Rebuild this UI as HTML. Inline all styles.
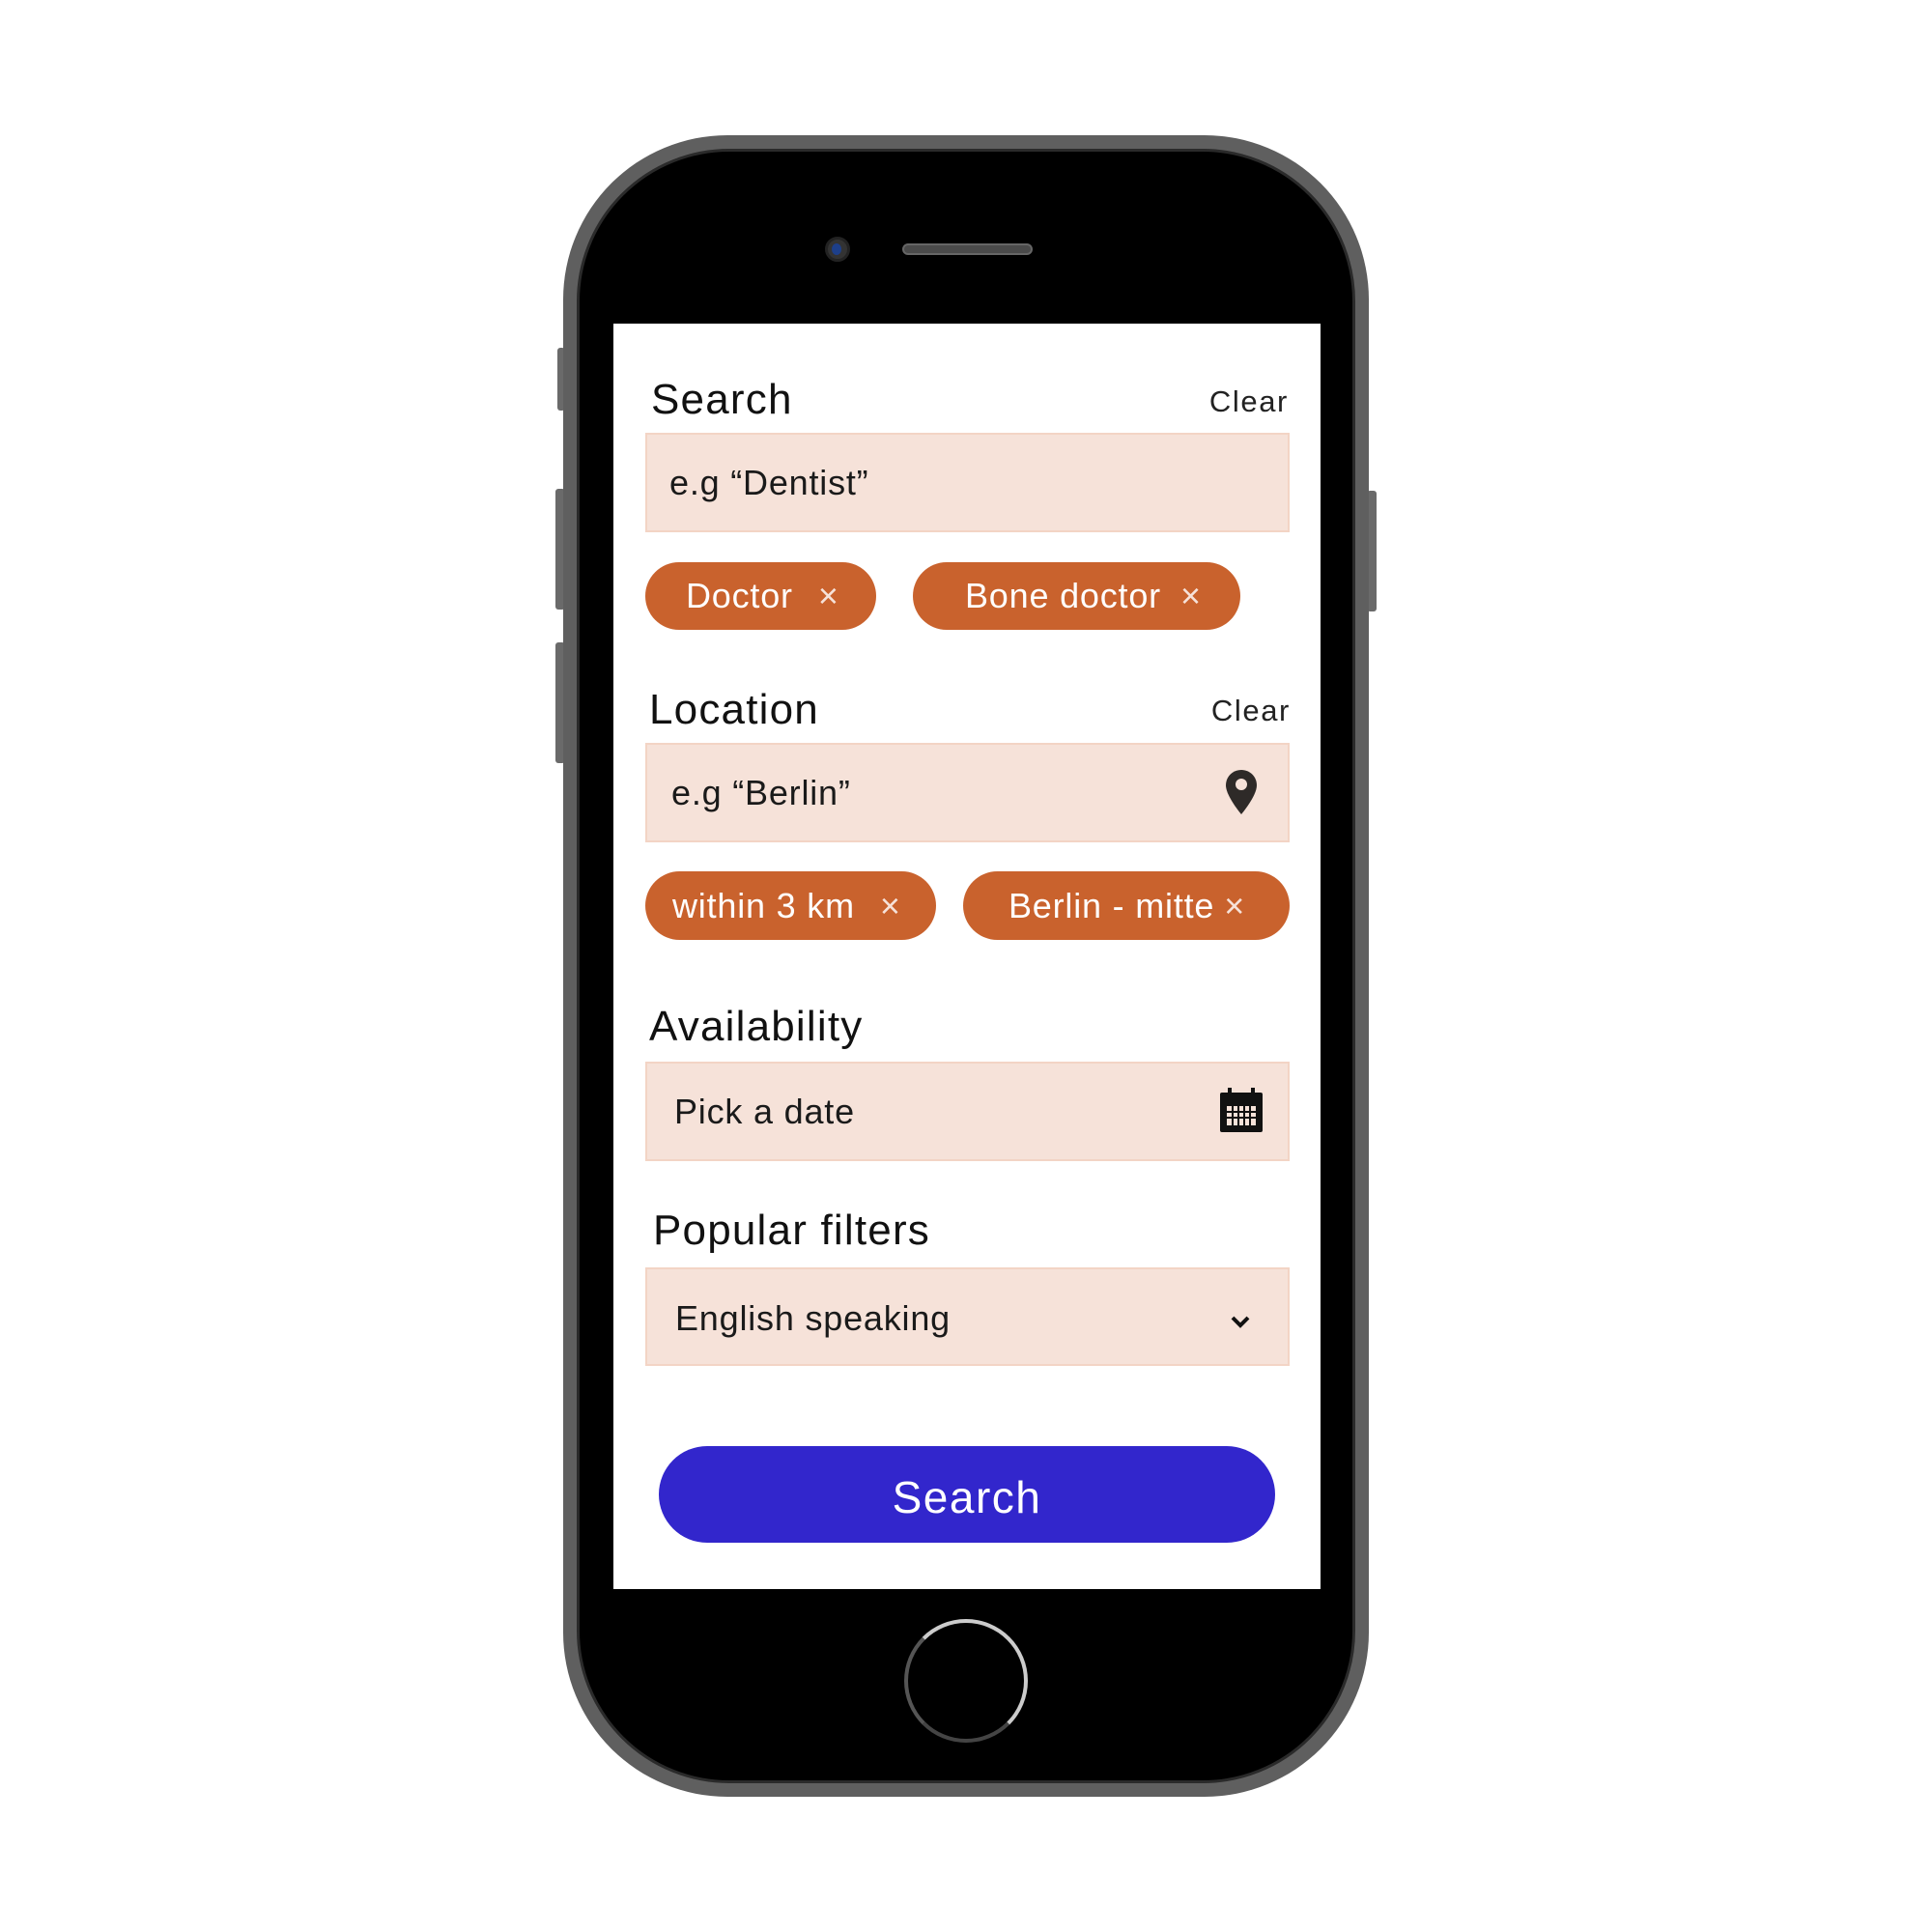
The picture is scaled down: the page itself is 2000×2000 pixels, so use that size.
<!DOCTYPE html>
<html><head><meta charset="utf-8"><style>
*{margin:0;padding:0;box-sizing:border-box}
body{width:2000px;height:2000px;background:#fff;position:relative;overflow:hidden;font-family:"Liberation Sans",sans-serif}
.a{position:absolute}
.phone{left:583px;top:140px;width:834px;height:1720px;border-radius:170px;background:#5f5f5f}
.inner{left:597px;top:154px;width:806px;height:1692px;border-radius:158px;background:#000;border:3px solid #2a2a2a}
.screen{left:635px;top:335px;width:732px;height:1310px;background:#fff}
.btn{background:#6a6a6a;border-radius:3px}
.h{color:#111;font-size:44px;line-height:1;letter-spacing:1.2px}
.clr{color:#222;font-size:31px;line-height:1;letter-spacing:1.6px}
.inp{background:#f6e2d9;border:2px solid #f3d4c5;left:668px;width:667px}
.it{font-size:36px;color:#1a1a1a;line-height:1;letter-spacing:0.8px}
.chip{background:#c9622d;border-radius:40px;color:#fff;font-size:36px;line-height:1;display:flex;align-items:center;letter-spacing:0.8px}
.x{font-size:36px;font-weight:300;color:#f6e2d9}
</style></head><body>
<div class="a btn" style="left:577px;top:360px;width:8px;height:65px"></div>
<div class="a btn" style="left:575px;top:506px;width:10px;height:125px"></div>
<div class="a btn" style="left:575px;top:665px;width:10px;height:125px"></div>
<div class="a btn" style="left:1415px;top:508px;width:10px;height:125px"></div>
<div class="a phone"></div>
<div class="a inner"></div>
<div class="a" style="left:854px;top:245px;width:26px;height:26px;border-radius:50%;background:#333;border:3px solid #222"></div>
<div class="a" style="left:861px;top:252px;width:10px;height:12px;border-radius:50%;background:#1d3f8a"></div>
<div class="a" style="left:934px;top:252px;width:135px;height:12px;border-radius:6px;background:#4a4a4a;border:2px solid #666"></div>
<div class="a" style="left:936px;top:1676px;width:128px;height:128px;border-radius:50%;border:4px solid #ccc;border-left-color:#555;border-bottom-color:#444"></div>
<div class="a screen"></div>

<div class="a h" style="left:674px;top:392px">Search</div>
<div class="a clr" style="right:666px;top:400px">Clear</div>
<div class="a inp" style="top:448px;height:103px"></div>
<div class="a it" style="left:693px;top:482px">e.g “Dentist”</div>
<div class="a chip" style="left:668px;top:582px;width:239px;height:70px;padding-left:42px">Doctor<span class="x" style="margin-left:26px">×</span></div>
<div class="a chip" style="left:945px;top:582px;width:339px;height:70px;padding-left:54px">Bone doctor<span class="x" style="margin-left:20px">×</span></div>

<div class="a h" style="left:672px;top:713px">Location</div>
<div class="a clr" style="right:664px;top:720px">Clear</div>
<div class="a inp" style="top:769px;height:103px"></div>
<div class="a it" style="left:695px;top:803px">e.g “Berlin”</div>
<svg class="a" style="left:1268px;top:796px" width="34" height="48" viewBox="0 0 34 48"><path d="M17 1C8 1 1 8 1 17c0 11 16 30 16 30s16-19 16-30C33 8 26 1 17 1z" fill="#2e2a28"/><circle cx="17" cy="16" r="6" fill="#f6e2d9"/></svg>
<div class="a chip" style="left:668px;top:902px;width:301px;height:71px;padding-left:28px">within 3 km<span class="x" style="margin-left:26px">×</span></div>
<div class="a chip" style="left:997px;top:902px;width:338px;height:71px;padding-left:47px">Berlin - mitte<span class="x" style="margin-left:10px">×</span></div>

<div class="a h" style="left:672px;top:1041px">Availability</div>
<div class="a inp" style="top:1099px;height:103px"></div>
<div class="a it" style="left:698px;top:1133px">Pick a date</div>
<svg class="a" style="left:1263px;top:1126px" width="44" height="46" viewBox="0 0 44 46"><rect x="0" y="5" width="44" height="41" rx="2" fill="#111"/><rect x="8" y="0" width="4" height="9" fill="#111"/><rect x="32" y="0" width="4" height="9" fill="#111"/><g fill="#f6e2d9"><rect x="7" y="19" width="30" height="20"/></g><g fill="#111"><rect x="12" y="19" width="2" height="20"/><rect x="18" y="19" width="2" height="20"/><rect x="24" y="19" width="2" height="20"/><rect x="30" y="19" width="2" height="20"/><rect x="7" y="24" width="30" height="2"/><rect x="7" y="30" width="30" height="2"/></g></svg>

<div class="a h" style="left:676px;top:1252px">Popular filters</div>
<div class="a inp" style="top:1312px;height:102px"></div>
<div class="a it" style="left:699px;top:1347px">English speaking</div>
<svg class="a" style="left:1273px;top:1361px" width="22" height="16" viewBox="0 0 22 16"><path d="M3 3l8 8 8-8" stroke="#111" stroke-width="4" fill="none"/></svg>

<div class="a" style="left:682px;top:1497px;width:638px;height:100px;border-radius:50px;background:#3226cc;color:#fff;font-size:46px;letter-spacing:1.5px;display:flex;align-items:center;justify-content:center;padding-top:6px">Search</div>
</body></html>
